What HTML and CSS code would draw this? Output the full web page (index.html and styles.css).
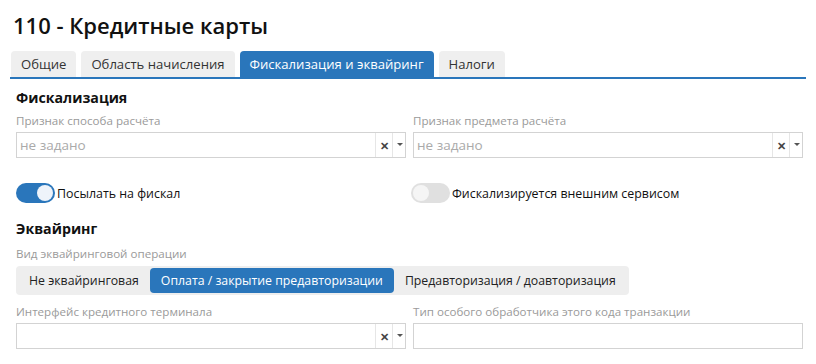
FILE: index.html
```html
<!DOCTYPE html>
<html lang="ru">
<head>
<meta charset="utf-8">
<link rel="stylesheet" href="styles.css">
</head>
<body>
<div class="page">
  <h1 class="title">110 - Кредитные карты</h1>
  <div class="tabs">
    <div class="tab">Общие</div>
    <div class="tab">Область начисления</div>
    <div class="tab active">Фискализация и эквайринг</div>
    <div class="tab">Налоги</div>
  </div>
  <div class="content">
    <h2 class="section">Фискализация</h2>
    <div class="row">
      <div class="field">
        <div class="label">Признак способа расчёта</div>
        <div class="select">
          <span class="placeholder">не задано</span>
          <span class="clear">✕</span>
          <span class="caret"></span>
        </div>
      </div>
      <div class="field">
        <div class="label">Признак предмета расчёта</div>
        <div class="select">
          <span class="placeholder">не задано</span>
          <span class="clear">✕</span>
          <span class="caret"></span>
        </div>
      </div>
    </div>
    <div class="row toggles">
      <div class="toggle-wrap"><span class="toggle on"><span class="knob"></span></span><span class="toggle-label">Посылать на фискал</span></div>
      <div class="toggle-wrap"><span class="toggle"><span class="knob"></span></span><span class="toggle-label">Фискализируется внешним сервисом</span></div>
    </div>
    <h2 class="section sec2">Эквайринг</h2>
    <div class="label lbl2">Вид эквайринговой операции</div>
    <div class="segmented">
      <span class="seg">Не эквайринговая</span>
      <span class="seg active">Оплата / закрытие предавторизации</span>
      <span class="seg">Предавторизация / доавторизация</span>
    </div>
    <div class="row row3">
      <div class="field">
        <div class="label">Интерфейс кредитного терминала</div>
        <div class="select">
          <span class="placeholder"></span>
          <span class="clear">✕</span>
          <span class="caret"></span>
        </div>
      </div>
      <div class="field">
        <div class="label">Тип особого обработчика этого кода транзакции</div>
        <div class="input"></div>
      </div>
    </div>
  </div>
</div>
</body>
</html>
```

FILE: styles.css
```css
* { box-sizing: border-box; }
html, body { margin: 0; padding: 0; background: #fff; }
body {
  font-family: "Open Sans", "Noto Sans", sans-serif;
  color: #222;
}
.page { padding: 0 10px; }
.title {
  margin: 0;
  padding: 10px 0 0 3px;
  height: 51px;
  font-size: 22px;
  font-weight: 600;
  line-height: 30px;
  color: #111;
}
.tabs {
  display: flex;
  gap: 5px;
  padding-left: 1px;
  border-bottom: 2px solid #2a76bb;
  width: 796px;
}
.tab {
  height: 26px;
  padding: 0 10px;
  background: #efefef;
  border-radius: 4px 4px 0 0;
  font-size: 13.1px;
  line-height: 26px;
  color: #333;
}
.tab.active { background: #2a76bb; color: #fff; }
.content { padding-left: 6px; }
.section {
  margin: 0;
  padding-top: 9px;
  font-size: 14.2px;
  font-weight: 700;
  line-height: 20px;
  color: #111;
}
.sec2 { padding-top: 16px; }
.row { display: flex; gap: 7px; }
.field { width: 390px; }
.label {
  font-size: 11.6px;
  color: #9a9a9a;
  line-height: 16px;
  margin-top: 4px;
  height: 20px;
  padding-top: 1px;
}
.lbl2 { margin-top: 6px; height: 21px; }
.select, .input {
  height: 26px;
  border: 1px solid #d3d3d3;
  display: flex;
  align-items: center;
}
.placeholder {
  flex: 1;
  padding-left: 3px;
  font-size: 13.5px;
  color: #aaa;
}
.clear {
  width: 17px;
  height: 24px;
  border-left: 1px solid #e6e6e6;
  display: flex;
  align-items: center;
  justify-content: center;
  font-size: 11px;
  font-weight: 700;
  color: #444;
}
.caret {
  width: 13px;
  height: 24px;
  border-left: 1px solid #e6e6e6;
  position: relative;
}
.caret::after {
  content: "";
  position: absolute;
  left: 4px;
  top: 10px;
  border-left: 3px solid transparent;
  border-right: 3px solid transparent;
  border-top: 3px solid #555;
}
.toggles { padding-top: 25px; gap: 0; }
.toggle-wrap { width: 396px; display: flex; align-items: center; }
.toggle {
  width: 39px;
  height: 20px;
  border-radius: 10px;
  background: #e0e0e0;
  position: relative;
  display: inline-block;
}
.toggle .knob {
  position: absolute;
  top: 2px;
  left: 2px;
  width: 16px;
  height: 16px;
  border-radius: 50%;
  background: #f5f5f5;
}
.toggle.on { background: #2a76bb; }
.toggle.on .knob { left: 21px; background: #eef3fa; }
.toggle-label { font-size: 12.4px; color: #111; margin-left: 2px; }
.segmented {
  display: inline-flex;
  align-items: center;
  background: #eeeeee;
  border-radius: 4px;
  padding: 2px;
  height: 29px;
  margin-top: 0;
}
.seg {
  height: 25px;
  line-height: 25px;
  padding: 0 11px;
  font-size: 12.3px;
  color: #222;
  border-radius: 4px;
}
.seg.active { background: #2a76bb; color: #fff; }
.row3 { margin-top: 4px; }
```
